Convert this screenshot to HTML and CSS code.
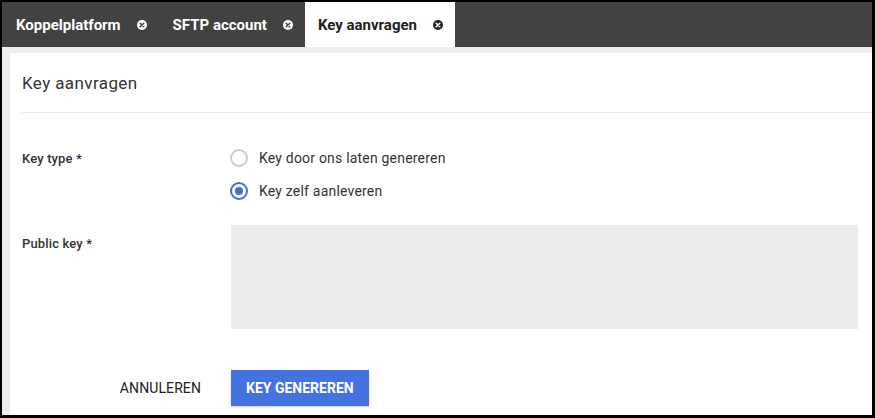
FILE: index.html
```html
<!DOCTYPE html>
<html lang="nl">

<head>
    <meta charset="UTF-8">
    <meta name="viewport" content="width=device-width, initial-scale=1.0">
    <title>Key aanvragen</title>
    <link rel="stylesheet" href="styles.css">
</head>

<body>

    <div class="app">
        <div class="tab-bar">
            <div class="tab">
                <span class="tab-label">Koppelplatform</span>
                <svg class="tab-close" viewBox="0 0 10 10" width="10" height="10">
                    <circle cx="5" cy="5" r="5" fill="#fff"/>
                    <path d="M3.2 3.2 L6.8 6.8 M6.8 3.2 L3.2 6.8" stroke="#424242" stroke-width="1.5" stroke-linecap="round"/>
                </svg>
            </div>
            <div class="tab">
                <span class="tab-label">SFTP account</span>
                <svg class="tab-close" viewBox="0 0 10 10" width="10" height="10">
                    <circle cx="5" cy="5" r="5" fill="#fff"/>
                    <path d="M3.2 3.2 L6.8 6.8 M6.8 3.2 L3.2 6.8" stroke="#424242" stroke-width="1.5" stroke-linecap="round"/>
                </svg>
            </div>
            <div class="tab active">
                <span class="tab-label">Key aanvragen</span>
                <svg class="tab-close" viewBox="0 0 10 10" width="10" height="10">
                    <circle cx="5" cy="5" r="5" fill="#222"/>
                    <path d="M3.2 3.2 L6.8 6.8 M6.8 3.2 L3.2 6.8" stroke="#fff" stroke-width="1.5" stroke-linecap="round"/>
                </svg>
            </div>
        </div>

        <div class="content">
            <div class="card">
                <div class="card-header">Key aanvragen</div>

                <div class="form">
                    <div class="form-row">
                        <label class="form-label">Key type <span class="required">*</span></label>
                        <div class="radio-group">
                            <label class="radio">
                                <span class="radio-circle"></span>
                                Key door ons laten genereren
                            </label>
                            <label class="radio checked">
                                <span class="radio-circle"></span>
                                Key zelf aanleveren
                            </label>
                        </div>
                    </div>

                    <div class="form-row key-row">
                        <label class="form-label">Public key <span class="required">*</span></label>
                        <div class="textarea"></div>
                    </div>

                    <div class="form-row actions">
                        <button class="btn-flat">ANNULEREN</button>
                        <div>
                            <button class="btn-primary">KEY GENEREREN</button>
                        </div>
                    </div>
                </div>
            </div>
        </div>
    </div>

</body>

</html>
```

FILE: styles.css
```css
body {
    margin: 0;
    padding: 2px 3px 3px 2px;
    height: 418px;
    box-sizing: border-box;
    background-color: #000;
    font-family: Roboto, "Liberation Sans", Arial, sans-serif;
    overflow: hidden;
}

.app {
    height: 100%;
    display: flex;
    flex-direction: column;
    background-color: #eee;
}

.tab-bar {
    display: flex;
    height: 45px;
    background-color: #424242;
}

.tab {
    display: flex;
    align-items: center;
    gap: 16px;
    padding: 0 12px 0 14px;
    color: white;
    font-size: 15px;
    font-weight: bold;
}

.tab.active {
    background-color: white;
    color: #222;
    padding-left: 13px;
}

.tab-close {
    flex-shrink: 0;
}

.content {
    flex-grow: 1;
    padding: 6px 0 0 8px;
    display: flex;
}

.card {
    flex-grow: 1;
    background-color: white;
    padding-left: 12px;
}

.card-header {
    height: 58px;
    display: flex;
    align-items: center;
    padding-top: 1px;
    font-size: 17px;
    letter-spacing: 0.4px;
    color: #333;
    border-bottom: 1px solid #e8e8e8;
}

.form {
    padding: 36px 14px 0 0;
}

.form-row {
    display: grid;
    grid-template-columns: 209px 1fr;
}

.form-label {
    font-size: 13px;
    font-weight: 500;
    letter-spacing: 0.15px;
    color: #333;
    padding-top: 2px;
}

.required {
    color: #1a2a6c;
}

.radio-group {
    display: flex;
    flex-direction: column;
    gap: 15px;
}

.radio {
    display: flex;
    align-items: center;
    gap: 11px;
    font-size: 14px;
    letter-spacing: 0.2px;
    color: #333;
    height: 18px;
}

.radio-circle {
    width: 14px;
    height: 14px;
    border: 2px solid #ccc;
    border-radius: 50%;
    box-sizing: content-box;
    display: flex;
    justify-content: center;
    align-items: center;
    margin-left: -1px;
}

.radio.checked .radio-circle {
    border-color: #3f6fdf;
}

.radio.checked .radio-circle::after {
    content: "";
    width: 8px;
    height: 8px;
    border-radius: 50%;
    background-color: #3f6fdf;
}

.key-row {
    margin-top: 25px;
}

.key-row .form-label {
    padding-top: 11px;
}

.textarea {
    height: 104px;
    background-color: #ececec;
}

.actions {
    margin-top: 41px;
    align-items: center;
}

.btn-flat {
    justify-self: end;
    margin-right: 14px;
    padding: 0 16px;
    height: 36px;
    border: none;
    background: none;
    font-family: inherit;
    font-size: 14px;
    letter-spacing: 0.1px;
    color: #222;
}

.btn-primary {
    height: 36px;
    padding: 0 15px;
    border: none;
    background-color: #4472df;
    color: white;
    font-family: inherit;
    font-size: 14px;
    font-weight: bold;
    box-shadow: 0 1px 2px rgba(0, 0, 0, 0.2);
}
```
